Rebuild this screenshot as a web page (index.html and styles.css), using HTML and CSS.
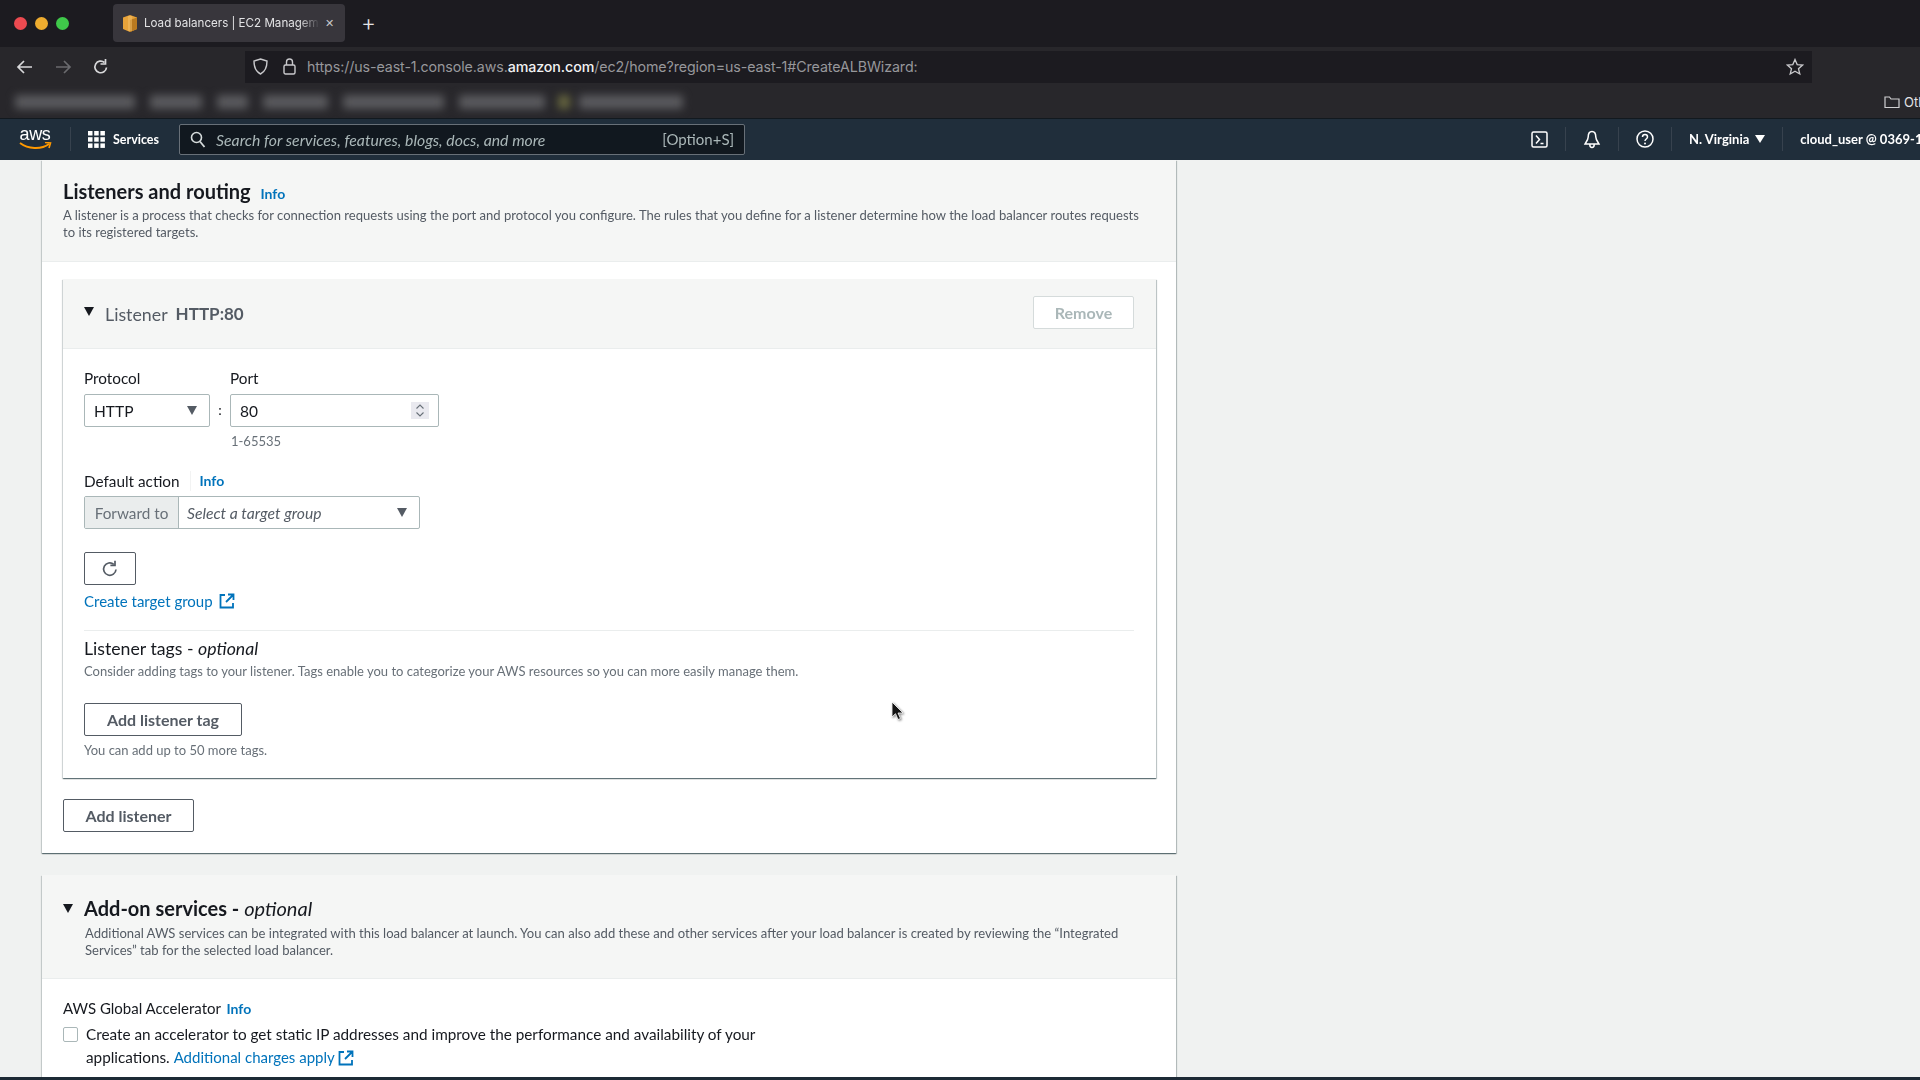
FILE: index.html
```html
<!DOCTYPE html>
<html>
<head>
<meta http-equiv="Content-Type" content="text/html; charset=utf-8">
<title>Load balancers | EC2 Management Console</title>
<link rel="stylesheet" href="styles.css">
</head>
<body>
<div id="window">

<div class="tabstrip">
  <span class="light red"></span><span class="light yellow"></span><span class="light green"></span>
  <div class="tab">
    <svg class="favicon" width="16" height="17" viewBox="0 0 16 17"><path d="M8 0 15 2.500V14L8 17 1 14V2.500Z" fill="#e7a33a"/><path d="M8 5 15 2.500V14L8 17Z" fill="#b97a20"/><path d="M6 1 10 1V16H6Z" fill="#f3c067" opacity=".55"/></svg>
    <span class="tab-title">Load balancers | EC2 Managem</span>
    <span class="tab-close">&#10005;</span>
  </div>
  <span class="tab-new">+</span>
</div>

<div class="toolbar">
  <svg class="nav-ic" width="18" height="16" viewBox="0 0 18 16"><path d="M16 8H2M8 2 2 8l6 6" fill="none" stroke="#d8d8da" stroke-width="1.700"/></svg>
  <svg class="nav-ic" width="18" height="16" viewBox="0 0 18 16"><path d="M2 8h14M10 2l6 6-6 6" fill="none" stroke="#6a6a6e" stroke-width="1.700"/></svg>
  <svg class="nav-ic" width="18" height="18" viewBox="0 0 18 18"><path d="M14.500 9.500a5.800 5.800 0 1 1-2-5" fill="none" stroke="#d8d8da" stroke-width="1.700"/><path d="M13.500 1v5h-5" fill="none" stroke="#d8d8da" stroke-width="1.700"/></svg>
  <div class="urlbar">
    <svg width="15" height="17" viewBox="0 0 15 17"><path d="M7.500 1 14 3c0 6-1.500 10.500-6.500 13C2.500 13.500 1 9 1 3Z" fill="none" stroke="#c9c9cc" stroke-width="1.400"/></svg>
    <svg class="lock" width="13" height="17" viewBox="0 0 13 17"><rect x="1" y="7" width="11" height="9" rx="1.500" fill="none" stroke="#c9c9cc" stroke-width="1.400"/><path d="M3.500 7V4a3 3 0 0 1 6 0v3" fill="none" stroke="#c9c9cc" stroke-width="1.400"/></svg>
    <span class="url">https://us-east-1.console.aws.<b>amazon.com</b>/ec2/home?region=us-east-1#CreateALBWizard:</span>
    <svg class="star" width="18" height="18" viewBox="0 0 18 18"><path d="M9 1.500 11.200 6.600 16.600 7.100 12.500 10.700 13.800 16 9 13.200 4.200 16 5.500 10.700 1.400 7.100 6.800 6.600Z" fill="none" stroke="#c9c9cc" stroke-width="1.300"/></svg>
  </div>
</div>

<div class="bookmarks">
  <div class="blurred">
    <span class="bm w120"></span><span class="bm w52"></span><span class="bm w31"></span><span class="bm w65"></span><span class="bm w101"></span><span class="bm w86"></span><span class="bm-dot"></span><span class="bm w104"></span>
  </div>
  <svg class="folder" width="16" height="14" viewBox="0 0 16 14"><path d="M1 12.500V2h4.500l1.500 2h8v8.500Z" fill="none" stroke="#d0d0d2" stroke-width="1.200"/></svg>
  <span class="other">Other Bookmarks</span>
</div>

<div class="awsnav">
  <div class="aws-logo">
    <span>aws</span>
    <svg width="34" height="9" viewBox="0 0 34 9"><path d="M2 1c8 6 21 7 29 1" fill="none" stroke="#f90" stroke-width="2"/><path d="M27 .5 32.500 1 31 6" fill="none" stroke="#f90" stroke-width="1.600"/></svg>
  </div>
  <span class="nav-sep first"></span>
  <svg class="grid" width="17" height="17" viewBox="0 0 17 17" fill="#fff"><rect width="4.500" height="4.500"/><rect x="6.200" width="4.500" height="4.500"/><rect x="12.400" width="4.500" height="4.500"/><rect y="6.200" width="4.500" height="4.500"/><rect x="6.200" y="6.200" width="4.500" height="4.500"/><rect x="12.400" y="6.200" width="4.500" height="4.500"/><rect y="12.400" width="4.500" height="4.500"/><rect x="6.200" y="12.400" width="4.500" height="4.500"/><rect x="12.400" y="12.400" width="4.500" height="4.500"/></svg>
  <span class="services">Services</span>
  <div class="search">
    <svg width="16" height="17" viewBox="0 0 16 17"><circle cx="6.500" cy="6.500" r="5" fill="none" stroke="#d5dbdb" stroke-width="1.600"/><path d="M10 10.500 14.500 16" stroke="#d5dbdb" stroke-width="1.800"/></svg>
    <span class="search-text">Search for services, features, blogs, docs, and more</span>
    <span class="search-key">[Option+S]</span>
  </div>
  <div class="nav-right">
    <svg width="17" height="17" viewBox="0 0 17 17"><rect x="1" y="1" width="15" height="15" rx="1.500" fill="none" stroke="#fff" stroke-width="1.500"/><path d="M5 4.500 8.500 8.500 5 12.500M9.500 12.500H12.500" fill="none" stroke="#fff" stroke-width="1.500"/></svg>
    <span class="nav-sep"></span>
    <svg width="18" height="19" viewBox="0 0 18 19"><path d="M9 1.500c-3 0-3.800 2.500-3.800 5.500 0 3-2.700 6-3.200 7h14c-.5-1-3.200-4-3.200-7 0-3-.8-5.500-3.800-5.500ZM6.800 14.500c0 4 4.400 4 4.400 0" fill="none" stroke="#fff" stroke-width="1.500"/></svg>
    <span class="nav-sep"></span>
    <svg width="18" height="18" viewBox="0 0 18 18"><circle cx="9" cy="9" r="8" fill="none" stroke="#fff" stroke-width="1.500"/><path d="M6.500 7c0-3.300 5-3.300 5 0 0 2-2.500 2-2.500 4" fill="none" stroke="#fff" stroke-width="1.500"/><circle cx="9" cy="13.500" r="1" fill="#fff"/></svg>
    <span class="nav-sep"></span>
    <span class="region">N. Virginia<i class="caret-small"></i></span>
    <span class="nav-sep"></span>
    <span class="user">cloud_user @ 0369-1</span>
  </div>
</div>

<div class="page">
  <div class="card">
    <div class="card-head">
      <h2>Listeners and routing <a class="info">Info</a></h2>
      <p class="desc">A listener is a process that checks for connection requests using the port and protocol you configure. The rules that you define for a listener determine how the load balancer routes requests to its registered targets.</p>
    </div>
    <div class="card-body">
      <div class="listener">
        <div class="listener-head">
          <i class="tri"></i>
          <span class="listener-name">Listener</span>
          <span class="listener-val">HTTP:80</span>
          <button class="btn disabled">Remove</button>
        </div>
        <div class="listener-body">
          <div class="proto-row">
            <div>
              <div class="label">Protocol</div>
              <div class="select proto"><span>HTTP</span><i class="caret"></i></div>
            </div>
            <span class="colon">:</span>
            <div>
              <div class="label">Port</div>
              <div class="select port"><span>80</span>
                <svg class="spin" width="18" height="17" viewBox="0 0 18 17"><rect width="18" height="17" fill="#e9e9ef"/><path d="M5.500 6.500 9 3l3.500 3.500M5.500 10.500 9 14l3.500-3.500" fill="none" stroke="#687078" stroke-width="1.100"/></svg>
              </div>
              <div class="hint">1-65535</div>
            </div>
          </div>
          <div class="label action-label">Default action<span class="label-sep"></span><a class="info">Info</a></div>
          <div class="forward">
            <span class="forward-to">Forward to</span>
            <div class="forward-select"><em>Select a target group</em><i class="caret"></i></div>
          </div>
          <button class="btn refresh"><svg width="18" height="18" viewBox="0 0 18 18"><path d="M15 9.500a6.200 6.200 0 1 1-2.200-5.200" fill="none" stroke="#545b64" stroke-width="1.700"/><path d="M14 .8v4.600H9.400" fill="none" stroke="#545b64" stroke-width="1.700"/></svg></button>
          <a class="link create">Create target group <svg class="ext" width="16" height="16" viewBox="0 0 16 16"><path d="M6 2H1.500v12.500H14V10M9 1.500h5.500V7M14.500 1.500 7 9" fill="none" stroke="#0073bb" stroke-width="1.800"/></svg></a>
          <div class="divider"></div>
          <div class="tags-title">Listener tags - <em>optional</em></div>
          <div class="hint tags-desc">Consider adding tags to your listener. Tags enable you to categorize your AWS resources so you can more easily manage them.</div>
          <button class="btn add-tag">Add listener tag</button>
          <div class="hint tags-left">You can add up to 50 more tags.</div>
        </div>
      </div>
      <button class="btn add-listener">Add listener</button>
    </div>
  </div>

  <div class="card second">
    <div class="card-head">
      <h2 class="addon"><i class="tri"></i>Add-on services - <em>optional</em></h2>
      <p class="desc indent">Additional AWS services can be integrated with this load balancer at launch. You can also add these and other services after your load balancer is created by reviewing the “Integrated Services” tab for the selected load balancer.</p>
    </div>
    <div class="card-body">
      <div class="label accel">AWS Global Accelerator <a class="info">Info</a></div>
      <div class="check-row">
        <span class="checkbox"></span>
        <span class="check-text">Create an accelerator to get static IP addresses and improve the performance and availability of your applications. <a class="link">Additional charges apply <svg class="ext" width="16" height="16" viewBox="0 0 16 16"><path d="M6 2H1.500v12.500H14V10M9 1.500h5.500V7M14.500 1.500 7 9" fill="none" stroke="#0073bb" stroke-width="1.800"/></svg></a></span>
      </div>
    </div>
  </div>
</div>

<div class="bottom"></div>

<svg class="cursor" width="14" height="20" viewBox="0 0 14 20"><path d="M1 1v15l3.500-3.300L7 18.500l2.500-1-2.500-5.500h5Z" fill="#111" stroke="#fff" stroke-width=".8"/></svg>
</div>
</body>
</html>
```

FILE: styles.css
```css
html, body { margin: 0; padding: 0; height: 100%; overflow: hidden; background: #f0f2f1; }
body { font-family: Lato, "Liberation Sans", sans-serif; color: #16191f; }
#window { position: relative; display: flex; flex-direction: column; width: 1920px; height: 1080px; overflow: hidden; filter: blur(0.35px); }
button { font-family: inherit; }
svg { flex: none; }

/* browser chrome */
.tabstrip { display: flex; align-items: center; box-sizing: border-box; height: 47px; padding-bottom: 1px; flex: none; background: #1c1b20; }
.light { width: 13px; height: 13px; border-radius: 50%; margin-right: 8px; }
.light.red { background: #ec4a50; margin-left: 14px; }
.light.yellow { background: #eeac2f; }
.light.green { background: #3fc94a; }
.tab { display: flex; align-items: center; width: 232px; height: 38px; margin: 0 0 0 36px; box-sizing: border-box; padding-left: 9px; border-radius: 4px; background: #38363c; color: #e3e3e5; }
.favicon { margin-right: 6px; }
.tab-title { width: 176px; overflow: hidden; white-space: nowrap; font: 11.600px Inter, "Liberation Sans", sans-serif; -webkit-mask-image: linear-gradient(to right, #000 88%, transparent); mask-image: linear-gradient(to right, #000 88%, transparent); }
.tab-close { font-size: 11px; color: #c8c8ca; margin-left: 5px; }
.tab-new { margin-left: 16px; font: 300 23px Inter, sans-serif; color: #e3e3e5; }

.toolbar { display: flex; align-items: center; height: 39px; flex: none; background: #28272b; }
.nav-ic { margin-left: 16px; margin-right: 4px; }
.nav-ic + .nav-ic { margin-left: 16px; }
.urlbar { display: flex; align-items: center; box-sizing: border-box; width: 1567px; height: 32px; margin-left: 131px; padding-left: 8px; background: #1c1b20; }
.lock { margin-left: 15px; }
.url { margin-left: 11px; font: 14.250px Inter, "Liberation Sans", sans-serif; letter-spacing: -.1px; color: #97979b; white-space: nowrap; }
.url b { font-weight: 500; color: #f2f2f3; }
.star { margin-left: auto; margin-right: 8px; }

.bookmarks { position: relative; display: flex; align-items: center; height: 32px; flex: none; background: #28272b; overflow: hidden; }
.blurred { display: flex; align-items: center; gap: 15px; margin-left: 15px; filter: blur(4px); }
.bm { display: block; height: 14px; background: #5a5a5e; border-radius: 2px; }
.w120 { width: 120px; } .w104 { width: 104px; } .w101 { width: 101px; } .w86 { width: 86px; } .w65 { width: 65px; } .w52 { width: 52px; } .w31 { width: 31px; }
.bm-dot { width: 12px; height: 14px; background: #66653f; margin: 0 -6px 0 -2px; }
.folder { margin-left: auto; margin-right: 4px; }
.other { flex: none; width: 16px; overflow: hidden; white-space: nowrap; font: 13px Inter, sans-serif; color: #e3e3e5; }

/* aws console bar */
.awsnav { display: flex; align-items: center; height: 42px; flex: none; box-sizing: border-box; padding-bottom: 1px; border-top: 1px solid #12191f; background: #202e3b; color: #fff; overflow: hidden; }
.aws-logo { display: flex; flex-direction: column; align-items: center; width: 34px; margin-left: 18px; }
.aws-logo span { font: 18px/14px "Liberation Sans", sans-serif; letter-spacing: -.3px; }
.aws-logo svg { margin-top: 1px; }
.nav-sep { flex: none; width: 1px; height: 24px; background: #37424e; }
.nav-sep.first { margin-left: 18px; }
.grid { margin-left: 17px; }
.services { margin-left: 8px; font-size: 12.500px; font-weight: 700; }
.search { display: flex; align-items: center; box-sizing: border-box; width: 566px; height: 31px; margin-left: 20px; padding: 0 10px; border: 1px solid #687078; border-radius: 2px; background: #11181f; color: #aab7b8; }
.search-text { margin-left: 10px; font-size: 15.800px; font-style: italic; }
.search-key { margin-left: auto; font-size: 15px; }
.nav-right { display: flex; align-items: center; flex: none; margin-left: auto; gap: 17px; width: 389px; white-space: nowrap; }
.region { font-size: 13px; font-weight: 700; }
.caret-small { display: inline-block; margin-left: 6px; border: 5px solid transparent; border-top: 8px solid #fff; border-bottom: 0; vertical-align: 1px; }
.user { font-size: 13px; font-weight: 700; }

/* page */
.page { flex: 1; overflow: hidden; padding-left: 42px; }
.bottom { height: 3px; flex: none; background: #1d2a35; }
.cursor { position: absolute; left: 891px; top: 701px; filter: drop-shadow(1px 1px 1px rgba(0,0,0,.5)); }
.card { width: 1134px; margin-bottom: 22px; background: #fff; box-shadow: 0 1px 1px 0 rgba(0,28,36,.45), 1px 1px 1px 0 rgba(0,28,36,.2), -1px 1px 1px 0 rgba(0,28,36,.12); }
.card-head { box-sizing: border-box; height: 102px; padding: 19px 21px 0; background: #f5f6f5; border-bottom: 1px solid #eaeded; }
.second .card-head { height: 104px; padding-top: 21px; }
h2 { margin: 0; font-size: 20px; line-height: 24px; font-weight: 700; color: #16191f; }
h2 em { font-weight: 400; }
.addon { display: flex; align-items: center; white-space: pre; }
.addon .tri { margin: 0 11px 0 0; }
.info { font-size: 14px; line-height: 1; font-weight: 700; color: #0073bb; margin-left: 5px; }
.desc { max-width: 1085px; margin: 4px 0 0; font-size: 13.050px; line-height: 17px; color: #545b64; }
.second .desc { margin-top: 5px; }
.indent { padding-left: 22px; max-width: 1063px; }
.card-body { padding: 17px 20px 21px 21px; }
.second .card-body { padding-top: 19px; }

.listener { box-shadow: 0 1px 1px 0 rgba(0,28,36,.45), 1px 1px 1px 0 rgba(0,28,36,.2), -1px 1px 1px 0 rgba(0,28,36,.12); }
.listener-head { display: flex; align-items: center; box-sizing: border-box; height: 70px; padding: 0 22px 0 21px; background: #f5f6f5; border-bottom: 1px solid #eaeded; }
.tri { display: block; flex: none; border: 5.500px solid transparent; border-top: 9px solid #16191f; border-bottom: 0; margin: -4px 0 0 0; }
.listener-name { margin-left: 11px; font-size: 17.800px; color: #545b64; }
.listener-val { margin-left: 8px; font-size: 17px; font-weight: 700; color: #545b64; }
.btn { box-sizing: border-box; height: 33px; padding: 0; border: 1px solid #545b64; border-radius: 2px; background: #fff; color: #545b64; font-size: 16px; font-weight: 700; }
.btn.disabled { width: 101px; margin: -3px 0 0 auto; border-color: #d5dbdb; color: #aab7b8; }

.listener-body { padding: 20px 22px 20px 21px; }
.label { font-size: 15.300px; line-height: 18px; color: #16191f; }
.proto-row { display: flex; align-items: flex-start; }
.select { display: flex; align-items: center; box-sizing: border-box; height: 33px; margin-top: 7px; padding: 0 9px; border: 1px solid #aab7b8; border-radius: 2px; font-size: 15.500px; }
.proto { width: 126px; }
.port { width: 209px; }
.caret { display: block; flex: none; margin: 0 3px 0 auto; border: 5px solid transparent; border-top: 9px solid #545b64; border-bottom: 0; }
.spin { margin-left: auto; }
.colon { width: 20px; margin-top: 32px; text-align: center; font-size: 14px; }
.hint { font-size: 13px; line-height: 16px; color: #687078; }
.port + .hint { margin-top: 6px; padding-left: 1px; }
.action-label { display: flex; align-items: center; height: 20px; line-height: 20px; margin-top: 22px; }
.label-sep { width: 1px; height: 20px; margin-left: 10px; background: #f2f3f3; }
.action-label .info { margin-left: 9px; }
.forward { display: flex; width: 336px; height: 33px; box-sizing: border-box; margin-top: 5px; border: 1px solid #aab7b8; border-radius: 2px; }
.forward-to { display: flex; align-items: center; justify-content: center; width: 93px; flex: none; background: #eaeded; border-right: 1px solid #aab7b8; font-size: 15.300px; color: #687078; }
.forward-select { display: flex; align-items: center; flex: 1; padding: 0 9px 0 8px; font-size: 15.700px; color: #545b64; }
.refresh { display: flex; align-items: center; justify-content: center; width: 52px; margin-top: 23px; }
.link { color: #0073bb; font-size: 15px; }
.create { display: flex; align-items: center; gap: 6px; height: 20px; margin-top: 6px; }
.ext { vertical-align: -3px; }
.divider { height: 1px; margin-top: 19px; background: #eaeded; }
.tags-title { margin-top: 7px; font-size: 17.700px; line-height: 22px; color: #16191f; }
.tags-desc { margin-top: 3px; }
.add-tag { display: block; width: 158px; margin-top: 24px; }
.tags-left { margin-top: 6px; }
.add-listener { display: block; width: 131px; margin-top: 21px; }

.accel { font-size: 15px; line-height: 20px; }
.accel .info { margin-left: 2px; }
.check-row { display: flex; margin-top: 5px; }
.checkbox { flex: none; box-sizing: border-box; width: 15px; height: 15px; margin: 4px 8px 0 0; border: 1px solid #aab7b8; border-radius: 2px; background: #fff; }
.check-text { width: 690px; font-size: 15.300px; line-height: 23px; color: #16191f; }
```
